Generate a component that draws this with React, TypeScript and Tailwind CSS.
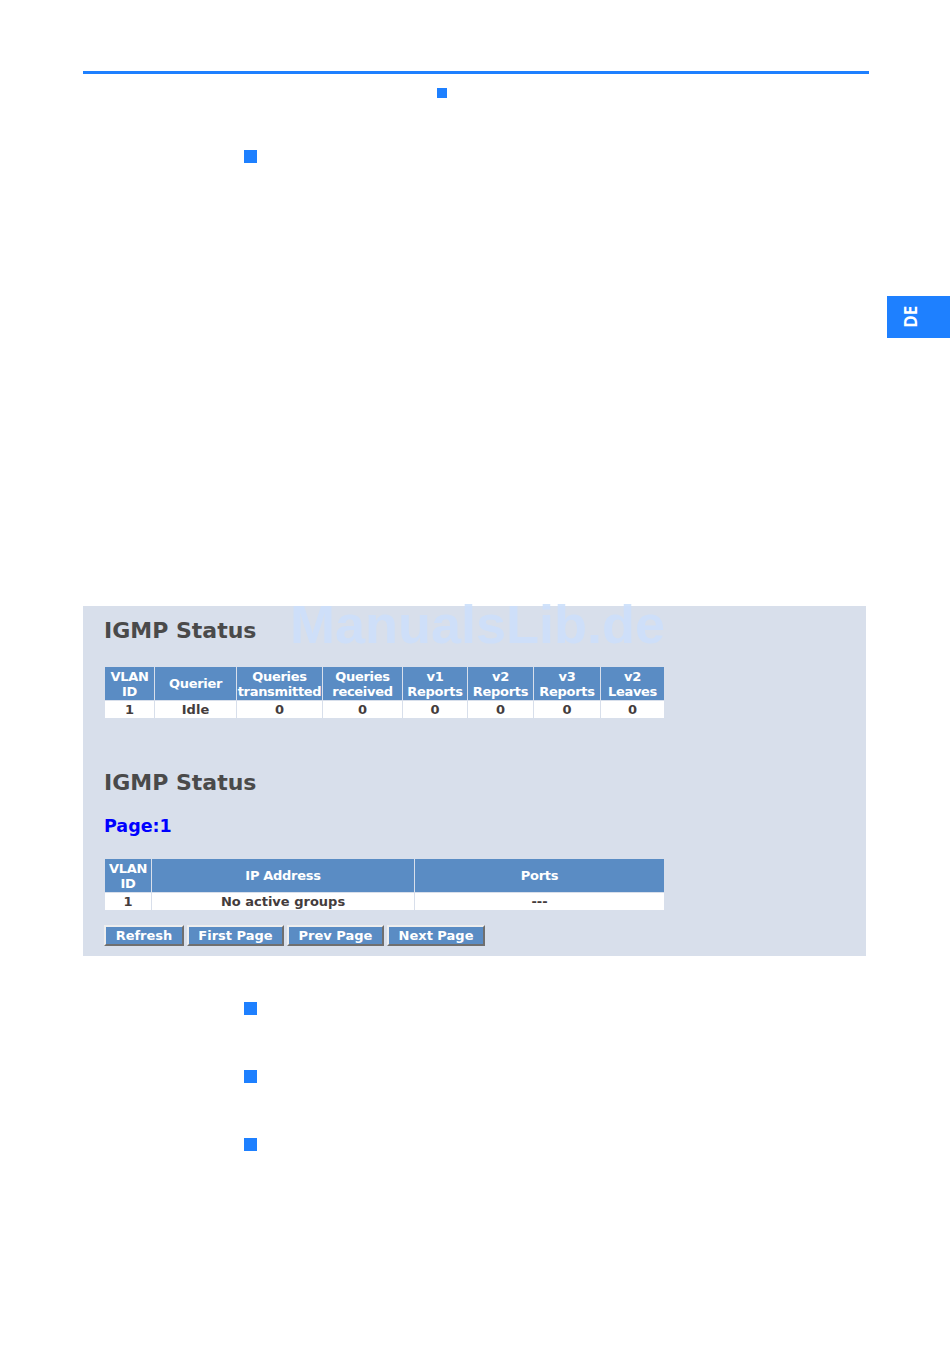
import type { ReactNode } from 'react';

const font = { fontFamily: '"DejaVu Sans", Verdana, sans-serif' };

function Square({ className }: { className: string }) {
  return <div className={`bg-[#1e80ff] ${className}`} />;
}

function Th({ children, w }: { children: ReactNode; w: string }) {
  return (
    <th className={`${w} overflow-visible whitespace-nowrap bg-[#5a8cc4] p-0 text-center align-middle text-[13px] font-bold leading-[15px] tracking-[-0.3px] text-white`}>
      {children}
    </th>
  );
}

function Td({ children }: { children: ReactNode }) {
  return <td className="h-[17px] bg-white p-0 text-center text-[13px] font-bold leading-[17px] text-[#443c3c]">{children}</td>;
}

function Btn({ label, w }: { label: string; w: string }) {
  return (
    <button
      className={`${w} h-[21px] border-2 border-t-[#eeeeee] border-l-[#eeeeee] border-b-[#6f6f6f] border-r-[#6f6f6f] bg-[#5a8cc4] p-0 text-[13px] font-bold leading-[17px] text-white`}
    >
      {label}
    </button>
  );
}

export default function App() {
  return (
    <div className="relative h-[1351px] w-[950px] bg-white" style={font}>
      <div className="pt-[71px]">
        <div className="ml-[83px] h-[3px] w-[786px] bg-[#1e80ff]" />
        <Square className="ml-[437px] mt-[14px] h-[10px] w-[10px]" />
        <Square className="ml-[244px] mt-[52px] h-[13px] w-[13px]" />

        {/* screenshot panel */}
        <div className="relative ml-[83px] mt-[443px] h-[350px] w-[783px] bg-[#d8dfeb] pl-[21px] pt-[13px]">
          <h2 className="text-[22px] font-bold leading-[24px] text-[#4a4a4a]">IGMP Status</h2>

          <table className="mt-[23px] w-[561px] table-fixed border-separate border-spacing-[1px]">
            <thead>
              <tr className="h-[33px]">
                <Th w="w-[49px]">VLAN<br />ID</Th>
                <Th w="w-[81px]">Querier</Th>
                <Th w="w-[85px]">Queries<br />transmitted</Th>
                <Th w="w-[79px]">Queries<br />received</Th>
                <Th w="w-[64px]">v1<br />Reports</Th>
                <Th w="w-[65px]">v2<br />Reports</Th>
                <Th w="w-[66px]">v3<br />Reports</Th>
                <Th w="w-[63px]">v2<br />Leaves</Th>
              </tr>
            </thead>
            <tbody>
              <tr>
                <Td>1</Td>
                <Td>Idle</Td>
                <Td>0</Td>
                <Td>0</Td>
                <Td>0</Td>
                <Td>0</Td>
                <Td>0</Td>
                <Td>0</Td>
              </tr>
            </tbody>
          </table>

          <h2 className="mt-[52px] text-[22px] font-bold leading-[24px] text-[#4a4a4a]">IGMP Status</h2>
          <div className="mt-[19px] text-[17.5px] font-bold leading-[24px] text-[#0000ff]">Page:1</div>

          <table className="mt-[20px] w-[561px] table-fixed border-separate border-spacing-[1px]">
            <thead>
              <tr className="h-[33px]">
                <Th w="w-[46px]">VLAN<br />ID</Th>
                <Th w="w-[262px]">IP Address</Th>
                <Th w="w-[249px]">Ports</Th>
              </tr>
            </thead>
            <tbody>
              <tr>
                <Td>1</Td>
                <Td>No active groups</Td>
                <Td>---</Td>
              </tr>
            </tbody>
          </table>

          <div className="mt-[14px] flex gap-[3px]">
            <Btn label="Refresh" w="w-[80px]" />
            <Btn label="First Page" w="w-[97px]" />
            <Btn label="Prev Page" w="w-[97px]" />
            <Btn label="Next Page" w="w-[98px]" />
          </div>

          <div
            className="pointer-events-none absolute left-[207px] top-[-14px] text-[54px] font-bold leading-[64px] text-[#cde0fb] opacity-90"
            style={{ fontFamily: '"Liberation Sans", Arial, sans-serif' }}
          >
            ManualsLib.de
          </div>
        </div>

        <Square className="ml-[244px] mt-[46px] h-[13px] w-[13px]" />
        <Square className="ml-[244px] mt-[55px] h-[13px] w-[13px]" />
        <Square className="ml-[244px] mt-[55px] h-[13px] w-[13px]" />
      </div>

      <div className="absolute right-0 top-[296px] flex h-[42px] w-[63px] items-center justify-center bg-[#1e80ff] pr-[14px]">
        <span className="-rotate-90 text-[17px] font-bold text-white" style={{ fontFamily: '"Open Sans", sans-serif' }}>
          DE
        </span>
      </div>
    </div>
  );
}
